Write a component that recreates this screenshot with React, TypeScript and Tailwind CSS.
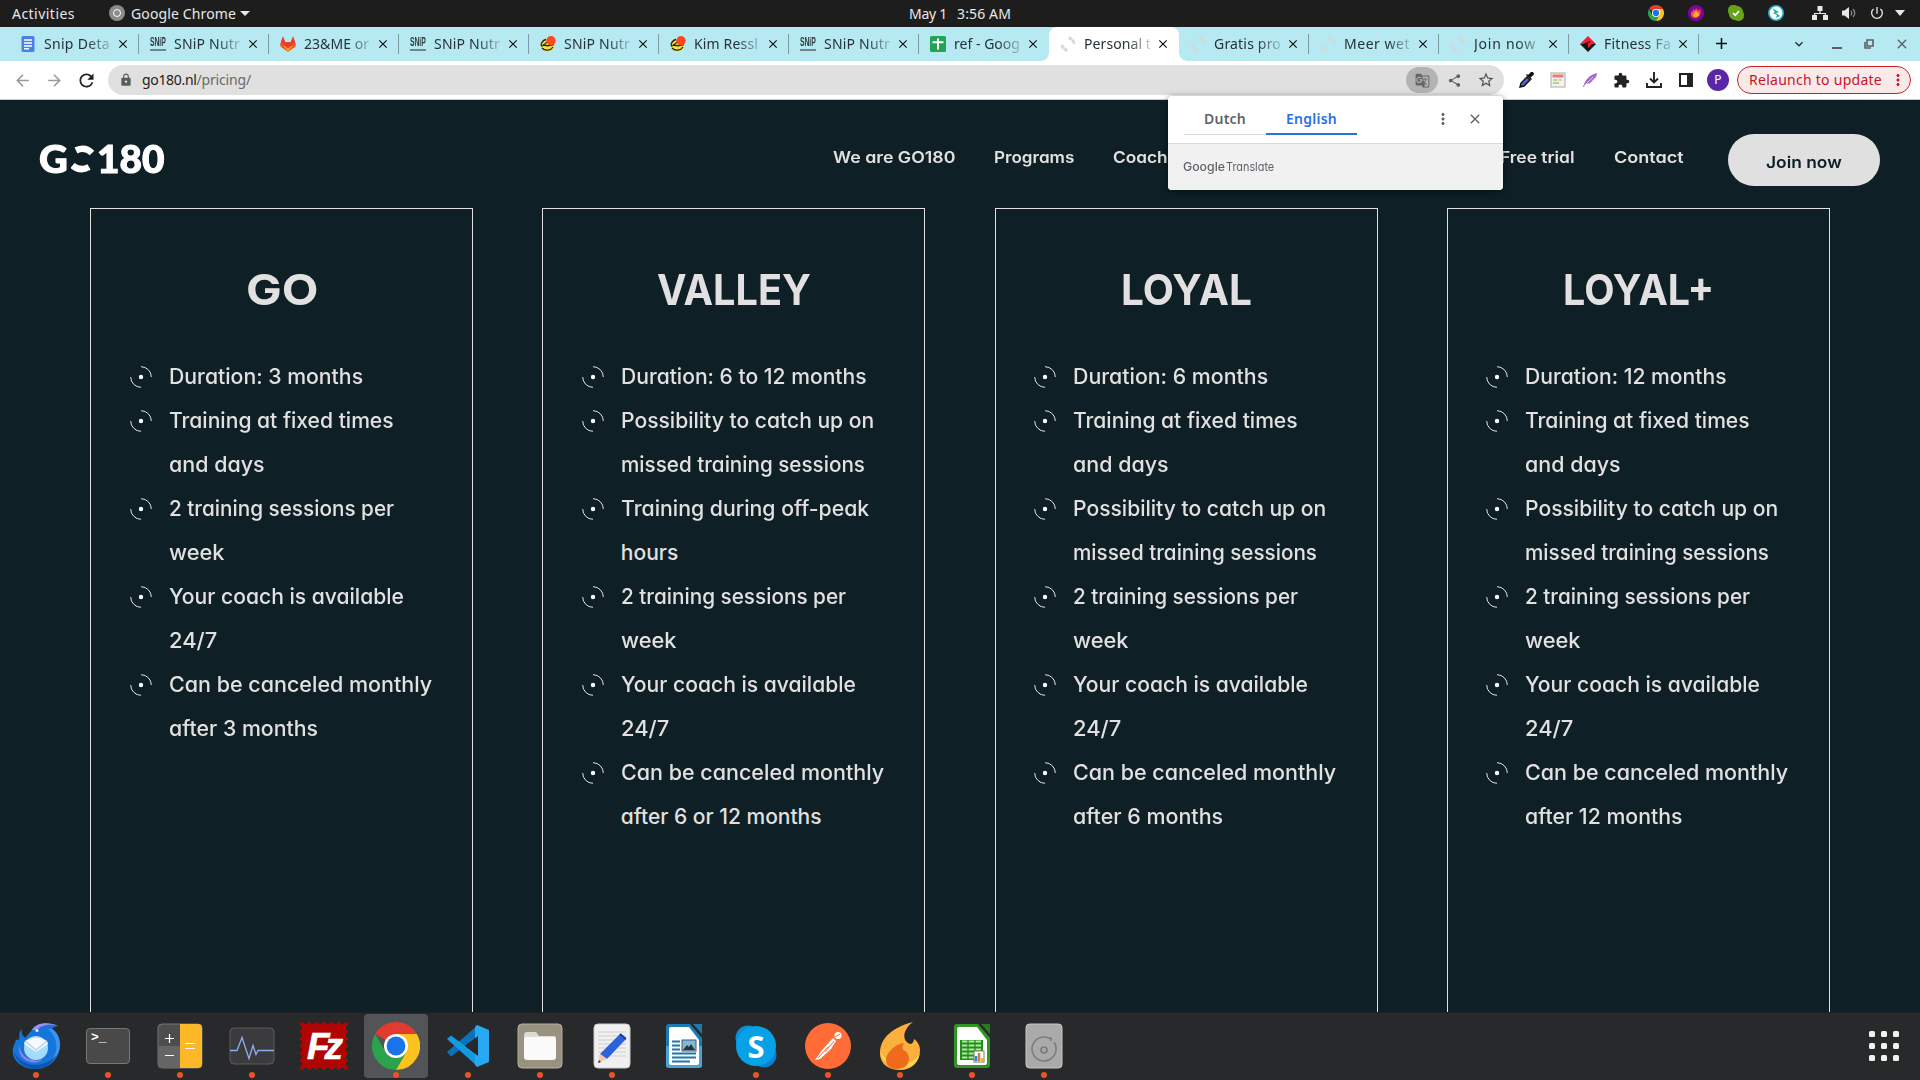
import { useLayoutEffect, useRef, type ReactNode } from "react";
import { MdGTranslate, MdShare, MdStarBorder, MdLock, MdExtension, MdRefresh, MdArrowBack, MdArrowForward, MdKeyboardArrowDown, MdClose, MdAdd, MdPowerSettingsNew, MdMoreVert } from "react-icons/md";

/* Text line whose letter spacing is adjusted so that it spans `w` pixels. */
function Fit({ w, children, className = "" }: { w: number; children: string; className?: string }) {
  const ref = useRef<HTMLSpanElement>(null);
  useLayoutEffect(() => {
    const el = ref.current;
    if (!el) return;
    el.style.letterSpacing = "0px";
    const natural = el.getBoundingClientRect().width;
    el.style.letterSpacing = `${(w + 1 - natural) / children.length}px`;
  }, [w, children]);
  return (
    <span ref={ref} className={`inline-block whitespace-nowrap ${className}`}>
      {children}
    </span>
  );
}

/* Text line whose glyphs are widened or narrowed so that it spans `w` pixels. */
function Wide({ w, children, className = "" }: { w: number; children: string; className?: string }) {
  const ref = useRef<HTMLSpanElement>(null);
  useLayoutEffect(() => {
    const el = ref.current;
    if (!el) return;
    const natural = el.offsetWidth;
    el.style.transform = `scaleX(${(w + 2) / natural})`;
  }, [w, children]);
  return (
    <span className={`inline-block text-left ${className}`} style={{ width: w }}>
      <span ref={ref} className="-ml-px inline-block origin-left whitespace-nowrap">
        {children}
      </span>
    </span>
  );
}

const Chrome = ({ className }: { className: string }) => (
  <svg viewBox="0 0 48 48" className={className}>
    <path d="M24 24 3.2 12A24 24 0 0 1 44.8 12Z" fill="#e33b2e" />
    <path d="M3.2 12A24 24 0 0 0 24 48L34.4 30 24 24 13.6 30Z" fill="#2ba24c" />
    <path d="M44.8 12A24 24 0 0 1 24 48L34.4 30 24 12Z" fill="#fcc31e" />
    <circle cx="24" cy="24" r="12" fill="#fff" />
    <circle cx="24" cy="24" r="9.4" fill="#1a73e8" />
  </svg>
);

const Docs = () => (
  <svg viewBox="0 0 16 16" className="size-4">
    <rect x="1.5" width="13" height="16" rx="1.5" fill="#4a80ee" />
    <path d="M4 4h8M4 7h8M4 10h8M4 12.8h5" stroke="#fff" strokeWidth="1.5" />
  </svg>
);
const Sheets = () => (
  <svg viewBox="0 0 16 16" className="size-4">
    <rect width="16" height="16" rx="1.5" fill="#23a455" />
    <path d="M2.5 6.2h11M8 2.5v11" stroke="#fff" strokeWidth="2" />
  </svg>
);
const Snip = () => (
  <span className="flex size-4 flex-col items-center font-['Liberation_Sans'] text-[#2f3b3f]">
    <span className="origin-top scale-x-[0.62] scale-y-[1.15] text-[11px] leading-[11px] font-bold">SNiP</span>
    <span className="mt-[2px] h-[2px] w-full bg-[#6f858a]" />
  </span>
);
const Gitlab = () => (
  <svg viewBox="0 0 16 16" className="size-4">
    <path d="M3 0.5 5.2 6h5.6L13 .5 16 8.5 15 11 8 16 1 11 0 8.5Z" fill="#f4512c" />
    <path d="M3.3 9.5 8 16l4.700-6.500L8 12Z" fill="#fca326" />
    <path d="M3 .5 5.200 6h5.600L13 .5 15 6 8 12 1 6Z" fill="#e5412b" />
  </svg>
);
const Bird = () => (
  <svg viewBox="0 0 16 16" className="size-4">
    <circle cx="7.5" cy="9" r="6.6" fill="#f2e23b" />
    <path d="M1 10c3 .6 4-3 7-4.500M3 8.500c4 2.500 8 1 11 0M2 12c3 3.500 9 2.500 11-1M1 9.500C1 7 3 4 6 3.500" fill="none" stroke="#222" strokeWidth="1.300" />
    <circle cx="11" cy="4.700" r="4.700" fill="#fb4a20" />
  </svg>
);
const Swirl = () => (
  <svg viewBox="0 0 16 16" className="size-4" fill="none" stroke="#d8d6d6" strokeWidth="3">
    <path d="M8.500 2a6 6 0 0 1 5.500 6" strokeDasharray="3.600 .5" />
    <path d="M7.500 14.200a6 6 0 0 1-5.500-6" strokeDasharray="3.600 .5" />
  </svg>
);
const Fitness = () => (
  <svg viewBox="0 0 16 16" className="size-4">
    <path d="M8 0 16 8H0Z" fill="#f01f35" />
    <path d="M0 8h16l-8 8Z" fill="#151515" />
    <path d="M3 8 10 5v6l-3 2Z" fill="#151515" />
    <path d="m8 6 4 2-4 4Z" fill="#f01f35" />
  </svg>
);

type Tab = { icon: ReactNode; title: string; w: number; active?: boolean; sep?: boolean };
const tabs: Tab[] = [
  { icon: <Docs />, title: "Snip Deta", w: 65, sep: true },
  { icon: <Snip />, title: "SNiP Nutr", w: 65, sep: true },
  { icon: <Gitlab />, title: "23&ME or", w: 64, sep: true },
  { icon: <Snip />, title: "SNiP Nutr", w: 65, sep: true },
  { icon: <Bird />, title: "SNiP Nutr", w: 65, sep: true },
  { icon: <Bird />, title: "Kim Ressl", w: 63, sep: true },
  { icon: <Snip />, title: "SNiP Nutr", w: 65, sep: true },
  { icon: <Sheets />, title: "ref - Goog", w: 65 },
  { icon: <Swirl />, title: "Personal t", w: 66, active: true },
  { icon: <Swirl />, title: "Gratis pro", w: 66, sep: true },
  { icon: <Swirl />, title: "Meer wet", w: 65, sep: true },
  { icon: <Swirl />, title: "Join now", w: 61, sep: true },
  { icon: <Fitness />, title: "Fitness Fa", w: 66, sep: true },
];

function TopBar() {
  return (
    <div className="grid h-[27px] shrink-0 grid-cols-3 items-center bg-[#1d1d1d] text-[14px] text-[#e8e8e8]">
      <div className="-mt-px flex items-center pl-3">
        <Fit w={62}>Activities</Fit>
        <span className="mr-1.5 ml-[34px] flex size-4 items-center justify-center rounded-full bg-[#8b8b8b]">
          <span className="size-2 rounded-full border-[1.5px] border-white bg-[#8b8b8b]" />
        </span>
        <Fit w={104}>Google Chrome</Fit>
        <span className="ml-1 border-x-[5px] border-t-[5px] border-x-transparent border-t-[#e8e8e8]" />
      </div>
      <div className="-mt-px flex justify-center gap-2.5">
        <Fit w={37}>May 1</Fit>
        <Fit w={53}>3:56 AM</Fit>
      </div>
      <div className="-mt-px flex items-center justify-end pr-[15px]">
        <Chrome className="mr-6 size-4" />
        <svg viewBox="0 0 16 16" className="mr-6 size-4">
          <circle cx="8" cy="8" r="8" fill="#7d079c" />
          <path d="M3 9c0-3 2-2 2-5l2 2 1-3 2 3 2-2c1 3 1 8-4 9-3 0-5-1-5-4Z" fill="#ff4b3e" />
          <path d="M5 10c1-3 2-2 3-5 1 3 3 2 3 5-2 3-5 3-6 0Z" fill="#ffb22e" />
        </svg>
        <svg viewBox="0 0 16 16" className="mr-6 size-4">
          <rect width="11" height="11" rx="5" fill="#66a318" />
          <rect x="5" y="5" width="11" height="11" rx="5" fill="#66a318" />
          <circle cx="8" cy="8" r="7.300" fill="#66a318" />
          <path d="m5 8 2.200 2.200L11 6" fill="none" stroke="#fff" strokeWidth="1.700" />
        </svg>
        <svg viewBox="0 0 16 16" className="mr-[28px] size-4">
          <circle cx="8" cy="8" r="7.200" fill="#fff" stroke="#27a9c9" strokeWidth="1.600" />
          <path d="m4 3 7 4-3 1 4 3-4 2 1-3-4-2 2-1Z" fill="#18ae96" />
        </svg>
        <svg viewBox="0 0 16 16" className="mr-[13px] size-4" fill="#e8e8e8">
          <path d="M5.500 1h5v5h-5ZM0 10h5v5H0ZM11 10h5v5h-5ZM7.400 6h1.200v2H14v2h-1.200V9H3.200v1H2V8h5.400Z" />
        </svg>
        <svg viewBox="0 0 16 16" className="mr-3 size-4" fill="none" stroke="#8b8b8b">
          <path d="M1 5.500h2.500L8 2v12l-4.500-3.500H1Z" fill="#e8e8e8" stroke="none" />
          <path d="M9.800 5.500q2 2.500 0 5M12 4q3.500 4 0 8" strokeWidth="1.200" />
        </svg>
        <MdPowerSettingsNew className="mr-[10px] size-4" />
        <span className="border-x-[5px] border-t-[6px] border-x-transparent border-t-[#e8e8e8]" />
      </div>
    </div>
  );
}

function TabStrip() {
  return (
    <div className="flex h-[34px] shrink-0 items-stretch bg-[#b7e9f2] pl-[8.5px] text-[14px] text-[#263238]">
      {tabs.map((t, i) => (
        <div key={i} className={`relative flex w-[130px] shrink-0 items-center pb-px pl-[11.5px] ${t.active ? "rounded-t-lg bg-white" : ""}`}>
          {t.icon}
          <span className="-mt-px ml-2 w-[66px] overflow-hidden mask-r-from-65% mask-r-to-110%">
            <Fit w={t.w} className="align-middle">{t.title}</Fit>
          </span>
          <MdClose className="ml-[6px] size-[14px] text-[#111]" />
          {t.sep && <span className="absolute top-[7px] right-0 h-5 w-px bg-[#7b9ba1]" />}
          {t.active && (
            <>
              <span className="absolute bottom-0 -left-2 size-2 bg-[radial-gradient(circle_at_0_0,#b7e9f2_7.5px,#fff_8px)]" />
              <span className="absolute -right-2 bottom-0 size-2 bg-[radial-gradient(circle_at_100%_0,#b7e9f2_7.5px,#fff_8px)]" />
            </>
          )}
        </div>
      ))}
      <div className="flex flex-1 items-center pb-px pl-[13px]">
        <MdAdd className="size-[19px] text-[#111]" />
        <MdKeyboardArrowDown className="ml-[60px] size-4 text-[#263238]" />
        <span className="mt-2 ml-[25px] h-[2px] w-[10px] bg-[#5b5f61]" />
        <svg viewBox="0 0 10 10" className="ml-[22px] size-[10px]" fill="none" stroke="#5b5f61" strokeWidth="1.600">
          <path d="M3 1h6v6H3ZM1 3v6h6" />
        </svg>
        <MdClose className="ml-[20px] size-4 text-[#5b5f61]" />
      </div>
    </div>
  );
}

function Toolbar() {
  return (
    <div className="flex h-[39px] shrink-0 items-center border-b border-[#c3d0d0] bg-white pl-[13px] text-[14px]">
      <MdArrowBack className="size-[19px] text-[#9a9a9a]" />
      <MdArrowForward className="ml-[13px] size-[19px] text-[#9a9a9a]" />
      <MdRefresh className="ml-[12px] size-[21px] text-[#222]" />
      <div className="ml-[11px] flex h-[30px] w-[1396px] items-center rounded-full bg-[#e0e0e0] pl-[11px]">
        <MdLock className="size-[14px] text-[#5a5d60]" />
        <span className="-mt-px ml-[9px]">
          <Fit w={53.5} className="text-[#222]">go180.nl</Fit>
          <Fit w={53.5} className="text-[#6a6a6a]">/pricing/</Fit>
        </span>
        <span className="ml-auto flex h-[26px] w-[32px] items-center justify-center rounded-full bg-[#b3b3b3]">
          <MdGTranslate className="size-[15px] text-[#63676a]" />
        </span>
        <MdShare className="ml-[9px] size-[15px] text-[#5b5f62]" />
        <MdStarBorder className="mr-[9px] ml-[15px] size-[18px] text-[#4f5356]" />
      </div>
      <svg viewBox="0 0 16 16" className="ml-[14px] size-4">
        <path d="m2 15 1-4 6-6 3 3-6 6Z" fill="#4f63c9" stroke="#111" strokeWidth="1.400" />
        <path d="m8 3 5 5 1-1-1.500-1.500L15.500 3a2 2 0 0 0-3-2.600L10 3 9 2Z" fill="#111" />
      </svg>
      <svg viewBox="0 0 16 16" className="ml-4 size-4">
        <rect x="1" y="1" width="14" height="14" fill="#f3f3f3" stroke="#aaa" />
        <path d="M2.500 4h11" stroke="#f2796f" strokeWidth="3" />
        <path d="M3 8h4M3 11h6" stroke="#95cf75" strokeWidth="1.500" />
        <path d="M8 8h4" stroke="#f5bcb5" strokeWidth="1.500" />
      </svg>
      <svg viewBox="0 0 16 16" className="ml-4 size-4">
        <path d="M1 15C3 8 7 3 15 1c0 4-3 6-4 7-2 3-5 4-7 4l-2 3Z" fill="#a66ac9" />
        <path d="M2 14 11 5" stroke="#ead5f5" strokeWidth=".8" />
      </svg>
      <MdExtension className="ml-[15px] size-[17px] text-[#222]" />
      <svg viewBox="0 0 16 16" className="ml-4 size-4" fill="none" stroke="#222" strokeWidth="1.900">
        <path d="M8 0v10M4 6.500l4 4 4-4M1 11v4h14v-4" />
      </svg>
      <svg viewBox="0 0 16 16" className="ml-4 size-4">
        <path d="M1 1h14v14H1ZM3 3v10h6V3Z" fillRule="evenodd" fill="#222" />
      </svg>
      <span className="ml-[13px] flex size-[22px] items-center justify-center rounded-full bg-[#5827a5] text-[12px] text-white">P</span>
      <div className="ml-2 flex h-7 w-[174px] items-center rounded-full border border-[#c5221f] bg-[#fae9e9] pl-[11px] text-[#c5162a]">
        <Fit w={132} className="-mt-px">Relaunch to update</Fit>
        <MdMoreVert className="ml-[7px] size-[18px]" />
      </div>
    </div>
  );
}

function Header() {
  return (
    <header className="flex h-[108px] shrink-0 items-start font-['Inter'] text-[16px] font-semibold text-[#e2e0e0]">
      <div className="mt-[37px] ml-[40px] flex h-[44px] w-[124px] items-center font-['Lato'] text-[37px] font-black text-white [-webkit-text-stroke:1px_white]">
        <Wide w={27}>G</Wide>
        <svg viewBox="0 0 24 28" className="mx-[3.5px] h-[28px] w-[24px] shrink-0" fill="none" stroke="#fff" strokeWidth="6.500">
          <path d="M5 5.500Q14 1 21 8" />
          <path d="M1.500 20.500Q9 27 18 22" />
        </svg>
        <Wide w={65}>180</Wide>
      </div>
      <nav className="mt-[45px] ml-[670px] flex h-6 shrink-0 items-center gap-[41px] [font-feature-settings:'cv11']">
        <Wide w={120}>We are GO180</Wide>
        <Wide w={78}>Programs</Wide>
        <span className="w-[346px]"><Wide w={53}>Coach</Wide></span>
        <Wide w={73}>Free trial</Wide>
        <Wide w={68}>Contact</Wide>
      </nav>
      <button className="mt-[34px] mr-10 ml-auto flex h-[52px] w-[152px] items-center justify-center rounded-[26px] bg-[#e0e0e0] pt-1 text-[#0e1f25] [font-feature-settings:'cv11']">
        <Wide w={74}>Join now</Wide>
      </button>
    </header>
  );
}

type Line = [string, number];
const dur3: Line[] = [["Duration: 3 months", 192]];
const fixed: Line[] = [["Training at fixed times", 223], ["and days", 94]];
const two: Line[] = [["2 training sessions per", 223], ["week", 53]];
const coach: Line[] = [["Your coach is available", 233], ["24/7", 46]];
const missed: Line[] = [["Possibility to catch up on", 251], ["missed training sessions", 242]];
const cancel: Line = ["Can be canceled monthly", 261];

const plans: { name: string; w: number; items: Line[][] }[] = [
  { name: "GO", w: 70, items: [dur3, fixed, two, coach, [cancel, ["after 3 months", 147]]] },
  {
    name: "VALLEY",
    w: 152,
    items: [
      [["Duration: 6 to 12 months", 244]],
      missed,
      [["Training during off-peak", 246], ["hours", 55]],
      two,
      coach,
      [cancel, ["after 6 or 12 months", 199]],
    ],
  },
  { name: "LOYAL", w: 129, items: [[["Duration: 6 months", 193]], fixed, missed, two, coach, [cancel, ["after 6 months", 148]]] },
  { name: "LOYAL+", w: 149, items: [[["Duration: 12 months", 200]], fixed, missed, two, coach, [cancel, ["after 12 months", 156]]] },
];

function Plans() {
  return (
    <main className="grid flex-1 grid-cols-4 gap-[69.3px] px-[90px] font-['Inter'] text-[#e2e0e0] [font-feature-settings:'cv11']">
      {plans.map((p) => (
        <section key={p.name} className="border border-b-0 border-[#e2e0e0] pt-[50px]">
          <h2 className="text-center text-[43px] leading-[60px] font-bold">
            <Wide w={p.w}>{p.name}</Wide>
          </h2>
          <ul className="mt-[36px] text-[21px] leading-[44px] font-medium">
            {p.items.map((lines, i) => (
              <li key={i} className="flex">
                <svg viewBox="0 0 22 22" className="mt-[11px] mr-[18px] ml-[38.5px] size-[22px] shrink-0" fill="none" stroke="#e2e0e0">
                  <path d="M11 .7A10.300 10.300 0 0 1 21.300 11M11 21.300A10.300 10.300 0 0 1 .7 11" />
                  <circle cx="11" cy="11" r="2.200" fill="#fff" stroke="none" />
                </svg>
                <span className="flex flex-col items-start">
                  {lines.map(([text, w]) => (
                    <Wide key={text} w={w}>{text}</Wide>
                  ))}
                </span>
              </li>
            ))}
          </ul>
        </section>
      ))}
    </main>
  );
}

function TranslatePopup() {
  return (
    <aside className="absolute top-[96px] left-[1168px] flex h-[94px] w-[335px] flex-col overflow-hidden rounded-[4px] bg-white text-[14px] font-semibold shadow-[0_1px_6px_rgba(0,0,0,0.5)]">
      <div className="flex h-[48px] items-start border-b border-[#d9dadc] pl-4">
        <div className="mt-2 flex h-[31px] w-[82px] items-center justify-center border-b border-[#d5d7da] pb-[2px] text-[#5f6368]">
          <Fit w={41}>Dutch</Fit>
        </div>
        <div className="mt-2 flex h-[31px] w-[91px] items-center justify-center border-b-2 border-[#2a6fdf] pb-px text-[#2a6fdf]">
          <Fit w={50}>English</Fit>
        </div>
        <MdMoreVert className="mt-[14px] ml-[77px] size-[18px] text-[#5f6368]" />
        <MdClose className="mt-[15px] ml-[15px] size-4 text-[#5f6368]" />
      </div>
      <div className="flex flex-1 items-center gap-[3px] bg-[#f1f1f1] pl-4 font-['Inter'] text-[12px] font-normal text-[#5f6368] [font-feature-settings:'cv11']">
        <Wide w={40} className="font-medium">Google</Wide>
        <Wide w={46}>Translate</Wide>
      </div>
    </aside>
  );
}

const box = "size-12";
const dock: { icon: ReactNode; dot?: boolean; active?: boolean }[] = [
  {
    dot: true,
    icon: (
      <svg viewBox="0 0 48 48" className={box}>
        <path d="M10 7C6 10 8 15 7 18c-3-1-3-1-4 3-8 14 6 27 22 26 14-1 23-12 23-24 0-9-4-14-8-16 2-2 4-3 6-3C34-1 23 1 19 9l-6 7C10 13 9 10 10 7Z" fill="#1675d9" />
        <path d="M20 8c5-8 18-8 26-4-10-3-18 0-21 4Z" fill="#a88af2" />
        <path d="M36 7c10 9 12 22 1 34 14-8 14-27 3-34Z" fill="#3b94f0" />
        <path d="M2 30c8 15 29 18 43 3-6 10-14 14-20 14C12 47 4 39 2 30Z" fill="#0c55b4" />
        <path d="M7 23c1 10 10 18 24 15-9 6-26 1-24-15Z" fill="#9082e8" />
        <circle cx="24" cy="26" r="12" fill="#a4dcfb" />
        <path d="M13 19q11-7 22 0l1 3-12 8-12-8Z" fill="#f5fafe" />
        <path d="m13 19 11 9 11-9" fill="none" stroke="#bcd3e5" strokeWidth="1.500" />
        <circle cx="25" cy="8.500" r="1.500" fill="#e3f6ff" />
      </svg>
    ),
  },
  {
    dot: true,
    icon: (
      <span className="flex h-9 w-11 rounded-[4px] border border-[#777] bg-[#494949] pt-0.5 pl-1 font-['Liberation_Mono'] text-[13px] leading-[14px] font-bold text-white">
        &gt;_
      </span>
    ),
  },
  {
    dot: true,
    icon: (
      <svg viewBox="0 0 48 48" className={box}>
        <rect x="2" y="2" width="44" height="44" rx="4" fill="#4d4d4d" stroke="#777" />
        <path d="M2 24h22v22H6a4 4 0 0 1-4-4Z" fill="#656565" />
        <path d="M24 2h18a4 4 0 0 1 4 4v36a4 4 0 0 1-4 4H24Z" fill="#fcb827" />
        <path d="M9 16.500h9M13.500 12v9M9 33.500h9M29 21.500h10M29 26.500h10" stroke="#fff" strokeWidth="1.200" />
      </svg>
    ),
  },
  {
    dot: true,
    icon: (
      <svg viewBox="0 0 48 48" className={box}>
        <rect x="2" y="6" width="44" height="36" rx="4" fill="#3b3b3d" stroke="#5d5d5d" />
        <path d="M2 28.500h7l5-13 7 21 4-13 3 9 2-4h16" fill="none" stroke="#8eacf0" strokeWidth="1.300" />
      </svg>
    ),
  },
  {
    icon: (
      <span className="relative flex size-12 items-center justify-center">
        <svg viewBox="0 0 48 48" className="absolute size-12">
          <rect x="2" y="2" width="44" height="44" fill="#b00505" />
          <rect x="2" y="2" width="44" height="44" fill="none" stroke="#b00505" strokeWidth="4" strokeDasharray="0 7.333" strokeLinecap="round" />
        </svg>
        <span className="relative mr-[3px] font-['Liberation_Sans'] text-[37px] leading-none font-bold tracking-[-5px] text-white italic [-webkit-text-stroke:0.6px_white]">Fz</span>
      </span>
    ),
  },
  { dot: true, active: true, icon: <Chrome className={box} /> },
  {
    dot: true,
    icon: (
      <svg viewBox="0 0 48 48" className={box}>
        <path d="M3 30 34 3v11L7 34.500Z" fill="#0873ba" />
        <path d="m3 17 4-3.500 27 20V45Z" fill="#149bdf" />
        <path d="m33 3 12 5v32l-12 5-2-2V5Z" fill="#29a9f2" />
        <path d="M34 14v20L21 24Z" fill="#29292b" />
      </svg>
    ),
  },
  {
    dot: true,
    icon: (
      <svg viewBox="0 0 48 48" className={box}>
        <rect x="2" y="2" width="44" height="44" rx="4" fill="#999280" stroke="#b6b09f" />
        <path d="M8 13q0-3 3-3h9l3 4h15q2 0 2 2v20H8Z" fill="#dedbd4" />
        <rect x="8" y="15" width="32" height="23" rx="3" fill="#fafafa" />
      </svg>
    ),
  },
  {
    dot: true,
    icon: (
      <svg viewBox="0 0 48 48" className={box}>
        <rect x="6" y="2" width="36" height="44" rx="4" fill="#f0f0f0" stroke="#ccc" />
        <path d="M10 10h28M10 14h28M10 18h28M10 22h28M10 26h28M10 30h28M10 34h28" stroke="#d0d0d0" />
        <path d="m12 32 20-20 6 5-19 20Z" fill="#2c61dc" />
        <path d="m12 32 7 5-9 4Z" fill="#f3c7a5" />
        <path d="m11 38 2 2-3 1Z" fill="#333" />
        <path d="m32 12 6 5" stroke="#173b9b" strokeWidth="2" />
      </svg>
    ),
  },
  {
    icon: (
      <svg viewBox="0 0 48 48" className={box}>
        <path d="M9 2h21l12 14v27q0 3-3 3H9q-3 0-3-3V5q0-3 3-3Z" fill="#1d79b2" />
        <path d="M6 24h36v19q0 3-3 3H9q-3 0-3-3Z" fill="#4aa3d3" />
        <path d="M11 5h18l10 13v23q0 2-2 2H11q-2 0-2-2V7q0-2 2-2Z" fill="#fff" />
        <path d="M33 2h9v10Z" fill="#1d79b2" />
        <path d="M12 19.500h8M12 23.500h8M12 27.500h8M12 31.500h24M12 35.500h24M12 39.500h18" stroke="#1c75ac" strokeWidth="1.800" />
        <rect x="22" y="18" width="14" height="11" fill="#7abbe3" stroke="#555" />
        <path d="m23 28 4-5 2 2 2-3 4 6Z" fill="#333" />
      </svg>
    ),
  },
  {
    dot: true,
    icon: (
      <span className="relative flex size-12 items-center justify-center">
        <svg viewBox="0 0 48 48" className="absolute size-12">
          <circle cx="16" cy="16" r="12.500" fill="#0b8ed8" />
          <circle cx="32" cy="33" r="12.500" fill="#0b7fd0" />
          <circle cx="24" cy="24" r="20" fill="#07a1e8" />
        </svg>
        <span className="relative font-['Open_Sans'] text-[31px] leading-none font-bold text-white">S</span>
      </span>
    ),
  },
  {
    dot: true,
    icon: (
      <svg viewBox="0 0 48 48" className={box}>
        <circle cx="24" cy="24" r="23" fill="#ff6c37" />
        <circle cx="34" cy="13.500" r="3.500" fill="#fff" />
        <path d="m29 16 3 3-5 8-11 10-5 1 8-11Z" fill="#fff" />
        <path d="m14 36 10-11M21 30l9-11M31 15l5-3" stroke="#ff6c37" />
      </svg>
    ),
  },
  {
    dot: true,
    icon: (
      <svg viewBox="0 0 48 48" className={box}>
        <path d="M37 0C18 5 4 15 4 31c0 12 10 17 20 17 12 0 20-8 20-20 0-5-3-9-6-11 0 3-2 5-4 5C26 19 26 8 37 0Z" fill="#fcb13c" />
        <path d="M4 30c2 10 12 17 20 17 12 0 20-8 20-19 1 4-5 13-14 13S10 40 4 30Z" fill="#ffd852" />
        <path d="M28 21c-9 1-18 10-18 17 0 6 5 9 11 9 7 0 12-4 12-10 0-4-2-7-4-8-3-1-3-5-1-8Z" fill="#ee6b1c" />
      </svg>
    ),
  },
  {
    dot: true,
    icon: (
      <svg viewBox="0 0 48 48" className={box}>
        <path d="M9 2h21l12 14v27q0 3-3 3H9q-3 0-3-3V5q0-3 3-3Z" fill="#2f9524" />
        <path d="M11 5h18l10 13v23q0 2-2 2H11q-2 0-2-2V7q0-2 2-2Z" fill="#fff" />
        <path d="M33 2h9v10Z" fill="#247e1b" />
        <rect x="12" y="18" width="23" height="20" fill="#248e1b" />
        <path d="M14 19.500h19M14 23.500h19M14 27.500h19M14 31.500h19M14 35.500h19" stroke="#b1e8a3" strokeWidth="2.200" />
        <path d="M20 18v20M27 18v20" stroke="#248e1b" strokeWidth="1.300" />
        <rect x="26" y="29" width="10" height="11" fill="#fff" stroke="#777" />
        <path d="M28 34v5" stroke="#1a8fd8" strokeWidth="2.500" />
        <path d="M31 31v8" stroke="#f07028" strokeWidth="2.500" />
        <path d="M34 36v3" stroke="#f4b520" strokeWidth="2.500" />
      </svg>
    ),
  },
  {
    dot: true,
    icon: (
      <svg viewBox="0 0 48 48" className={box}>
        <rect x="6" y="2" width="36" height="44" rx="3.500" fill="#aaa" stroke="#c8c8c8" />
        <path d="M32 18a12 12 0 1 0 4 8q0-3-2-6M31 19v-4" fill="none" stroke="#7b7b7b" strokeWidth="1.500" />
        <circle cx="24" cy="28" r="3" fill="none" stroke="#7b7b7b" strokeWidth="1.700" />
      </svg>
    ),
  },
];

function Dock() {
  return (
    <footer className="flex h-[68px] shrink-0 items-center bg-[#28292b] shadow-[inset_0_1px_0_#1c2022]">
      {dock.map((d, i) => (
        <div key={i} className="flex h-full w-[72px] items-center justify-center">
          <div className={`relative flex size-16 items-center justify-center rounded-[4px] ${d.active ? "bg-[#535457]" : ""}`}>
            {d.icon}
            {d.dot && <span className="absolute bottom-0 left-[29px] size-1.5 rounded-full bg-[#e95420]" />}
          </div>
        </div>
      ))}
      <div className="mr-[21px] ml-auto grid grid-cols-3 gap-1.5">
        {Array.from({ length: 9 }, (_, i) => (
          <span key={i} className="size-1.5 rounded-[1.5px] bg-[#f2f2f0]" />
        ))}
      </div>
    </footer>
  );
}

export default function App() {
  return (
    <div className="relative flex h-[1080px] w-[1920px] flex-col overflow-hidden bg-[#0e1f25] font-['Noto_Sans',sans-serif]">
      <TopBar />
      <TabStrip />
      <Toolbar />
      <Header />
      <Plans />
      <Dock />
      <TranslatePopup />
    </div>
  );
}
